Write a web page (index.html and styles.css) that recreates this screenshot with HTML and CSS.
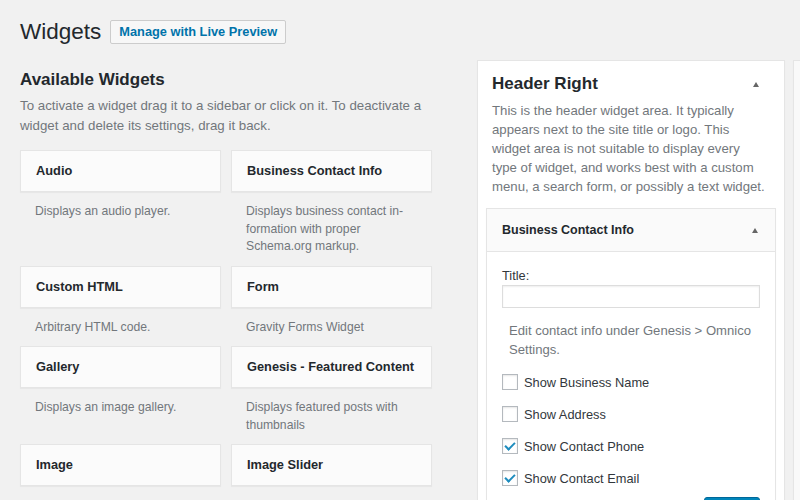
FILE: index.html
```html
<!DOCTYPE html>
<html lang="en">
<head>
    <meta charset="UTF-8">
    <meta name="viewport" content="width=device-width, initial-scale=1.0">
    <title>Widgets</title>
    <link rel="stylesheet" href="styles.css">
</head>
<body>
    <div class="wrap">
        <div class="page-head">
            <h1>Widgets</h1>
            <a class="btn" href="#">Manage with Live Preview</a>
        </div>

        <div class="columns">
            <div class="available">
                <h2>Available Widgets</h2>
                <p class="intro">To activate a widget drag it to a sidebar or click on it. To deactivate a widget and delete its settings, drag it back.</p>

                <div class="widget-grid">
                    <div class="widget">
                        <div class="widget-title">Audio</div>
                        <div class="widget-desc">Displays an audio player.</div>
                    </div>
                    <div class="widget">
                        <div class="widget-title">Business Contact Info</div>
                        <div class="widget-desc">Displays business contact in&shy;formation with proper Schema.org markup.</div>
                    </div>
                    <div class="widget">
                        <div class="widget-title">Custom HTML</div>
                        <div class="widget-desc">Arbitrary HTML code.</div>
                    </div>
                    <div class="widget">
                        <div class="widget-title">Form</div>
                        <div class="widget-desc">Gravity Forms Widget</div>
                    </div>
                    <div class="widget">
                        <div class="widget-title">Gallery</div>
                        <div class="widget-desc">Displays an image gallery.</div>
                    </div>
                    <div class="widget">
                        <div class="widget-title">Genesis - Featured Content</div>
                        <div class="widget-desc">Displays featured posts with thumbnails</div>
                    </div>
                    <div class="widget">
                        <div class="widget-title">Image</div>
                        <div class="widget-desc">Displays an image.</div>
                    </div>
                    <div class="widget">
                        <div class="widget-title">Image Slider</div>
                        <div class="widget-desc">Displays a slideshow of images in a widget area.</div>
                    </div>
                </div>
            </div>

            <div class="sidebar">
                <div class="sidebar-head">
                    <h2>Header Right</h2>
                    <span class="toggle"></span>
                </div>
                <p class="sidebar-desc">This is the header widget area. It typically appears next to the site title or logo. This widget area is not suitable to display every type of widget, and works best with a custom menu, a search form, or possibly a text widget.</p>

                <div class="open-widget">
                    <div class="open-widget-head">
                        <h3>Business Contact Info</h3>
                        <span class="toggle"></span>
                    </div>
                    <div class="open-widget-body">
                        <label class="field-label" for="bci_title">Title:</label>
                        <input class="text-input" id="bci_title" type="text">
                        <p class="note">Edit contact info under Genesis &gt; Omnico Settings.</p>

                        <label class="check"><input type="checkbox"> Show Business Name</label>
                        <label class="check"><input type="checkbox"> Show Address</label>
                        <label class="check"><input type="checkbox" checked> Show Contact Phone</label>
                        <label class="check"><input type="checkbox" checked> Show Contact Email</label>

                        <div class="open-widget-foot">
                            <span class="links"><a href="#">Delete</a> | <a href="#">Done</a></span>
                            <button class="btn-primary">Saved</button>
                        </div>
                    </div>
                </div>
            </div>

            <div class="sidebar sidebar-next">
                <div class="sidebar-head">
                    <h2>Header</h2>
                </div>
                <div class="ghost-box"></div>
            </div>
        </div>
    </div>
</body>
</html>
```

FILE: styles.css
```css
html, body {
    margin: 0;
    padding: 0;
    height: 100%;
    overflow: hidden;
}
body {
    font-family: "Liberation Sans", Arial, sans-serif;
    background-color: #f1f1f1;
    color: #23282d;
}
a {
    color: #0073aa;
    text-decoration: none;
}
.wrap {
    padding: 20px 0 0 20px;
}
.page-head {
    display: flex;
    align-items: center;
    height: 24px;
}
.page-head h1 {
    margin: 0 9px 0 0;
    font-size: 22.5px;
    font-weight: 400;
    line-height: 24px;
    color: #23282d;
}
.btn {
    display: inline-block;
    height: 22px;
    line-height: 22px;
    padding: 0 8px;
    border: 1px solid #ccc;
    border-radius: 2px;
    background-color: #f7f7f7;
    font-size: 12.8px;
    font-weight: 700;
    color: #0073aa;
}
.columns {
    display: flex;
    align-items: flex-start;
}
.available {
    width: 412px;
    flex: none;
    margin-right: 45px;
}
.available h2 {
    margin: 26px 0 0;
    font-size: 17px;
    line-height: 20px;
    font-weight: 700;
}
.intro {
    margin: 6px 0 14px;
    font-size: 13.3px;
    line-height: 20px;
    color: #72777c;
}
.widget-grid {
    display: grid;
    grid-template-columns: 201px 201px;
    column-gap: 10px;
}
.widget-title {
    height: 40px;
    line-height: 40px;
    padding: 0 15px;
    background-color: #fbfbfb;
    border: 1px solid #e5e5e5;
    box-shadow: 0 1px 1px rgba(0, 0, 0, 0.04);
    font-size: 12.8px;
    font-weight: 700;
    color: #23282d;
}
.widget-desc {
    padding: 11px 15px 10px;
    font-size: 12.2px;
    line-height: 17.5px;
    color: #72777c;
    hyphens: manual;
}
.sidebar {
    width: 306px;
    flex: none;
    margin-top: 16px;
    background-color: #fff;
    border: 1px solid #e5e5e5;
    box-shadow: 0 1px 1px rgba(0, 0, 0, 0.04);
    height: 460px;
}
.sidebar-next {
    margin-left: 8px;
    background-color: #f9f9f9;
}
.sidebar-head {
    display: flex;
    align-items: center;
    justify-content: space-between;
    padding: 13px 25px 0 14px;
}
.sidebar-head h2 {
    margin: 0;
    font-size: 17px;
    line-height: 20px;
    font-weight: 700;
}
.toggle {
    width: 0;
    height: 0;
    border-left: 3.5px solid transparent;
    border-right: 3.5px solid transparent;
    border-bottom: 5px solid #666;
}
.sidebar-desc {
    margin: 7px 0 12px;
    padding: 0 18px 0 14px;
    font-size: 13.2px;
    line-height: 19px;
    color: #72777c;
}
.open-widget {
    margin: 0 8px;
    border: 1px solid #e5e5e5;
    box-shadow: 0 1px 1px rgba(0, 0, 0, 0.04);
}
.open-widget-head {
    display: flex;
    align-items: center;
    justify-content: space-between;
    height: 42px;
    padding: 0 17px 0 15px;
    background-color: #fafafa;
    border-bottom: 1px solid #e5e5e5;
}
.open-widget-head h3 {
    margin: 0;
    font-size: 12.5px;
    font-weight: 700;
}
.open-widget-body {
    padding: 15px 15px 0;
}
.field-label {
    display: block;
    font-size: 12.8px;
    line-height: 18px;
    color: #32373c;
}
.text-input {
    display: block;
    box-sizing: border-box;
    width: 100%;
    height: 23px;
    margin: 0;
    border: 1px solid #ddd;
    box-shadow: inset 0 1px 2px rgba(0, 0, 0, 0.07);
    background-color: #fff;
}
.note {
    margin: 13px 0 7px;
    padding-left: 7px;
    font-size: 13.1px;
    line-height: 19px;
    color: #72777c;
}
.check {
    display: flex;
    align-items: center;
    height: 32px;
    font-size: 12.8px;
    color: #32373c;
}
.check input {
    appearance: none;
    -webkit-appearance: none;
    position: relative;
    flex: none;
    width: 16px;
    height: 16px;
    margin: 0 6px 0 0;
    border: 1px solid #b4b9be;
    background-color: #fff;
    box-shadow: inset 0 1px 2px rgba(0, 0, 0, 0.1);
}
.check input:checked::before {
    content: "";
    position: absolute;
    left: 4px;
    top: 1px;
    width: 4px;
    height: 8px;
    border: solid #1e8cbe;
    border-width: 0 2.5px 2.5px 0;
    transform: rotate(45deg);
}
.open-widget-foot {
    display: flex;
    justify-content: space-between;
    align-items: flex-start;
    padding: 3px 0 10px;
}
.links {
    font-size: 12.5px;
    line-height: 26px;
    color: #ccc;
}
.links a {
    color: #a00;
}
.links a + a {
    color: #0073aa;
}
.btn-primary {
    height: 28px;
    width: 56px;
    background-color: #0085ba;
    border: 1px solid #006799;
    border-radius: 3px;
    color: #fff;
    font-size: 12.5px;
}
.ghost-box {
    margin: 100px 8px 0;
    height: 106px;
    border: 1px solid #e5e5e5;
    background-color: #fff;
}
```
